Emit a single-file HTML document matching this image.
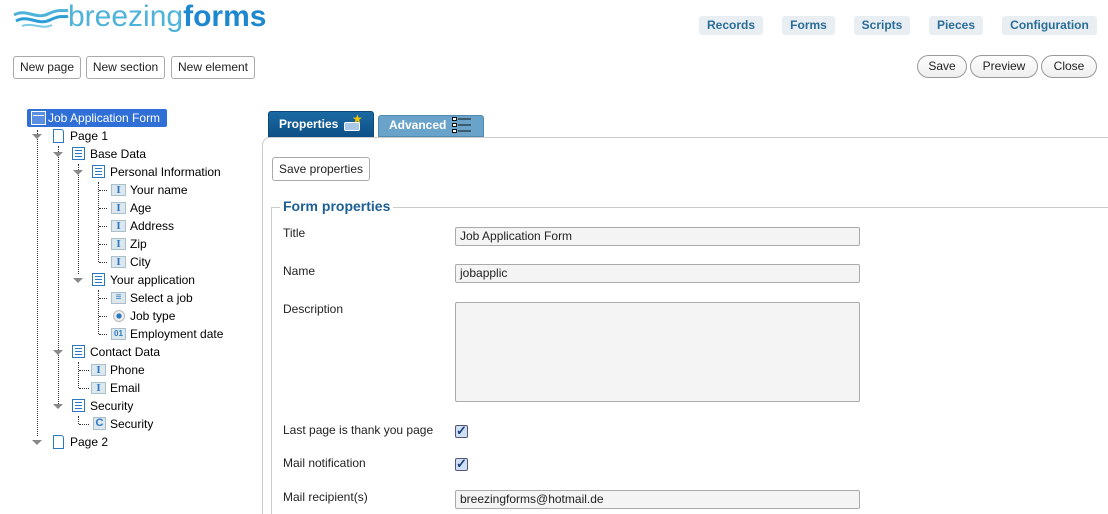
<!DOCTYPE html>
<html><head><meta charset="utf-8"><style>
html,body{margin:0;width:1108px;height:514px;overflow:hidden}
body{background:#fff;font-family:"Liberation Sans",Arial,sans-serif;font-size:12px;color:#000;position:relative}
.a{position:absolute}
.logo1{left:68px;top:0px;font-size:30px;color:#4fb3d9;letter-spacing:0px}
.logo1 b{color:#1e88cf}
.nav{top:16px;height:19px;background:#e9eef2;border-radius:3px;color:#2a6d99;font-weight:bold;font-size:12px;line-height:19px;text-align:center}
.btn{top:56px;border:1px solid #aaa;border-radius:3px;background:#fff;font-size:12px;line-height:21px;text-align:center;color:#222;box-sizing:border-box;height:23px}
.pill{top:55px;height:23px;border:1px solid #999;border-radius:12px;background:linear-gradient(#fff,#eee);font-size:12px;line-height:21px;text-align:center;color:#222;box-sizing:border-box}
.t{position:absolute;font-size:12px;line-height:18px;white-space:nowrap}
.arr{position:absolute;width:0;height:0;border-left:5px solid transparent;border-right:5px solid transparent;border-top:5px solid #888}
.vl{position:absolute;width:0;border-left:1px dotted #333}
.hl{position:absolute;height:0;border-top:1px dotted #333;width:8px}
.sec{position:absolute;width:11px;height:11px;border:1px solid #2b78c2;background:#fff}
.sec:before{content:"";position:absolute;left:2px;right:2px;top:2px;height:5px;border-top:1px solid #2b78c2;border-bottom:1px solid #2b78c2}
.sec:after{content:"";position:absolute;left:2px;right:2px;top:5px;border-top:1px solid #2b78c2}
.fld{position:absolute;width:13px;height:10px;background:#dde8ee;border:1px solid #aabfcc;color:#2b78c2;font-size:11px;line-height:10px;text-align:center;font-family:"Liberation Serif",serif;font-weight:bold}
.pg{position:absolute;width:9px;height:12px;border:1px solid #2b78c2;background:#fff;border-radius:0 3px 0 0}
.lbl{position:absolute;left:283px;font-size:12px;color:#222}
.inp{position:absolute;left:455px;width:399px;height:17px;border:1px solid #aaa;border-radius:2px;background:#f4f4f4;font-size:12px;line-height:17px;padding-left:4px;color:#222}
.cb{position:absolute;left:455px;width:11px;height:11px;border:1px solid #557;border-radius:2px;background:#cfe0f5;color:#1b3f7a;font-size:13px;line-height:10px;text-align:center;font-weight:bold}
</style></head><body>
<svg class="a" style="left:12px;top:6px" width="58" height="24" viewBox="0 0 58 24"><path d="M2 9 C14 2,24 14,36 8 S52 6,56 4" stroke="#4fb3d9" stroke-width="3" fill="none"/><path d="M4 15 C16 8,26 20,38 14 S52 12,56 10" stroke="#2e9fd6" stroke-width="3" fill="none"/><path d="M10 20 C20 16,30 24,40 19" stroke="#7ccbe8" stroke-width="2" fill="none"/></svg>
<div class="a logo1">breezing<b>forms</b></div>
<div class="a nav" style="left:699px;width:64px">Records</div>
<div class="a nav" style="left:782px;width:53px">Forms</div>
<div class="a nav" style="left:854px;width:56px">Scripts</div>
<div class="a nav" style="left:929px;width:54px">Pieces</div>
<div class="a nav" style="left:1002px;width:95px">Configuration</div>
<div class="a btn" style="left:13px;width:68px">New page</div>
<div class="a btn" style="left:86px;width:79px">New section</div>
<div class="a btn" style="left:171px;width:84px">New element</div>
<div class="a pill" style="left:917px;width:50px">Save</div>
<div class="a pill" style="left:970px;width:68px">Preview</div>
<div class="a pill" style="left:1041px;width:56px">Close</div>

<div class="a" style="left:27px;top:109px;width:140px;height:18px;background:#2f6fd6;border-radius:2px"></div>
<div class="a" style="left:31px;top:111px;width:13px;height:12px;border:1px solid #fff;background:#5b8fe0"></div>
<div class="a" style="left:33px;top:115px;width:11px;height:0;border-top:1px solid #fff"></div>
<div class="t" style="left:48px;top:109px;color:#fff">Job Application Form</div>
<div class="vl" style="left:37px;top:130px;height:306px"></div>
<div class="vl" style="left:58px;top:146px;height:258px"></div>
<div class="vl" style="left:78px;top:164px;height:110px"></div>
<div class="vl" style="left:98px;top:182px;height:80px"></div>
<div class="vl" style="left:98px;top:290px;height:44px"></div>
<div class="vl" style="left:78px;top:362px;height:26px"></div>
<div class="vl" style="left:78px;top:416px;height:8px"></div>

<div class="arr" style="left:32px;top:134px"></div><div class="pg" style="left:53px;top:129px"></div><div class="t" style="left:70px;top:127px">Page 1</div>
<div class="arr" style="left:53px;top:152px"></div><div class="sec" style="left:72px;top:147px"></div><div class="t" style="left:90px;top:145px">Base Data</div>
<div class="arr" style="left:73px;top:170px"></div><div class="sec" style="left:92px;top:165px"></div><div class="t" style="left:110px;top:163px">Personal Information</div>
<div class="hl" style="left:99px;top:190px"></div><div class="fld" style="left:111px;top:184px">I</div><div class="t" style="left:130px;top:181px">Your name</div>
<div class="hl" style="left:99px;top:208px"></div><div class="fld" style="left:111px;top:202px">I</div><div class="t" style="left:130px;top:199px">Age</div>
<div class="hl" style="left:99px;top:226px"></div><div class="fld" style="left:111px;top:220px">I</div><div class="t" style="left:130px;top:217px">Address</div>
<div class="hl" style="left:99px;top:244px"></div><div class="fld" style="left:111px;top:238px">I</div><div class="t" style="left:130px;top:235px">Zip</div>
<div class="hl" style="left:99px;top:262px"></div><div class="fld" style="left:111px;top:256px">I</div><div class="t" style="left:130px;top:253px">City</div>
<div class="arr" style="left:73px;top:278px"></div><div class="sec" style="left:92px;top:273px"></div><div class="t" style="left:110px;top:271px">Your application</div>
<div class="hl" style="left:99px;top:298px"></div><div class="fld" style="left:111px;top:292px;font-size:10px;font-family:'Liberation Sans'">≡</div><div class="t" style="left:130px;top:289px">Select a job</div>
<div class="hl" style="left:99px;top:316px"></div><div class="a" style="left:113px;top:310px;width:10px;height:10px;border-radius:50%;border:1px solid #bbb;background:radial-gradient(#2b78c2 35%,#eee 40%)"></div><div class="t" style="left:130px;top:307px">Job type</div>
<div class="hl" style="left:99px;top:334px"></div><div class="fld" style="left:111px;top:328px;font-size:8px;font-family:'Liberation Sans'">01</div><div class="t" style="left:130px;top:325px">Employment date</div>
<div class="arr" style="left:53px;top:350px"></div><div class="sec" style="left:72px;top:345px"></div><div class="t" style="left:90px;top:343px">Contact Data</div>
<div class="hl" style="left:79px;top:370px;width:10px"></div><div class="fld" style="left:91px;top:364px">I</div><div class="t" style="left:110px;top:361px">Phone</div>
<div class="hl" style="left:79px;top:388px;width:10px"></div><div class="fld" style="left:91px;top:382px">I</div><div class="t" style="left:110px;top:379px">Email</div>
<div class="arr" style="left:53px;top:404px"></div><div class="sec" style="left:72px;top:399px"></div><div class="t" style="left:90px;top:397px">Security</div>
<div class="hl" style="left:79px;top:424px;width:10px"></div><div class="fld" style="left:93px;top:417px;font-family:'Liberation Sans';font-size:11px;width:11px;height:11px;line-height:11px">C</div><div class="t" style="left:110px;top:415px">Security</div>
<div class="arr" style="left:32px;top:440px"></div><div class="pg" style="left:53px;top:435px"></div><div class="t" style="left:70px;top:433px">Page 2</div>

<div class="a" style="left:268px;top:111px;width:106px;height:27px;background:linear-gradient(#1b6aa3,#0d4f86);border-radius:3px 3px 0 0;border:1px solid #0c4777;box-sizing:border-box"></div>
<div class="a" style="left:279px;top:117px;color:#fff;font-weight:bold;font-size:12px">Properties</div>
<div class="a" style="left:344px;top:122px;width:14px;height:7px;background:#a9c8e8;border:1px solid #fff;border-radius:2px"></div>
<div class="a" style="left:352px;top:112px;color:#f5c400;font-size:12px">★</div>
<div class="a" style="left:378px;top:115px;width:106px;height:22px;background:#6aa3c9;border-radius:3px 3px 0 0;border:1px solid #5289b0;box-sizing:border-box"></div>
<div class="a" style="left:389px;top:118px;color:#fff;font-weight:bold;font-size:12px">Advanced</div>
<svg class="a" style="left:451px;top:115px" width="22" height="20"><g stroke="#111" fill="#fff"><rect x="1.5" y="2.5" width="4" height="3"/><rect x="1.5" y="8.5" width="4" height="3"/><rect x="1.5" y="14.5" width="4" height="3"/><path d="M7 4H20M7 10H20M7 16H20"/></g></svg>
<div class="a" style="left:262px;top:137px;width:860px;height:390px;border:1px solid #ccc;border-radius:8px 8px 0 0"></div>
<div class="a" style="left:272px;top:157px;width:98px;height:24px;border:1px solid #aaa;border-radius:3px;box-sizing:border-box;font-size:12px;line-height:22px;text-align:center;color:#222">Save properties</div>
<div class="a" style="left:271px;top:207px;width:850px;height:320px;border:1px solid #ccc;border-right:none"></div>
<div class="a" style="left:280px;top:198px;background:#fff;padding:0 3px;color:#1d5f95;font-weight:bold;font-size:14px">Form properties</div>

<div class="lbl" style="top:226px">Title</div><div class="inp" style="top:227px">Job Application Form</div>
<div class="lbl" style="top:264px">Name</div><div class="inp" style="top:264px">jobapplic</div>
<div class="lbl" style="top:302px">Description</div><div class="inp" style="top:302px;height:98px"></div>
<div class="lbl" style="top:423px">Last page is thank you page</div><div class="cb" style="top:425px">✓</div>
<div class="lbl" style="top:456px">Mail notification</div><div class="cb" style="top:458px">✓</div>
<div class="lbl" style="top:490px">Mail recipient(s)</div><div class="inp" style="top:490px">breezingforms@hotmail.de</div>
</body></html>
